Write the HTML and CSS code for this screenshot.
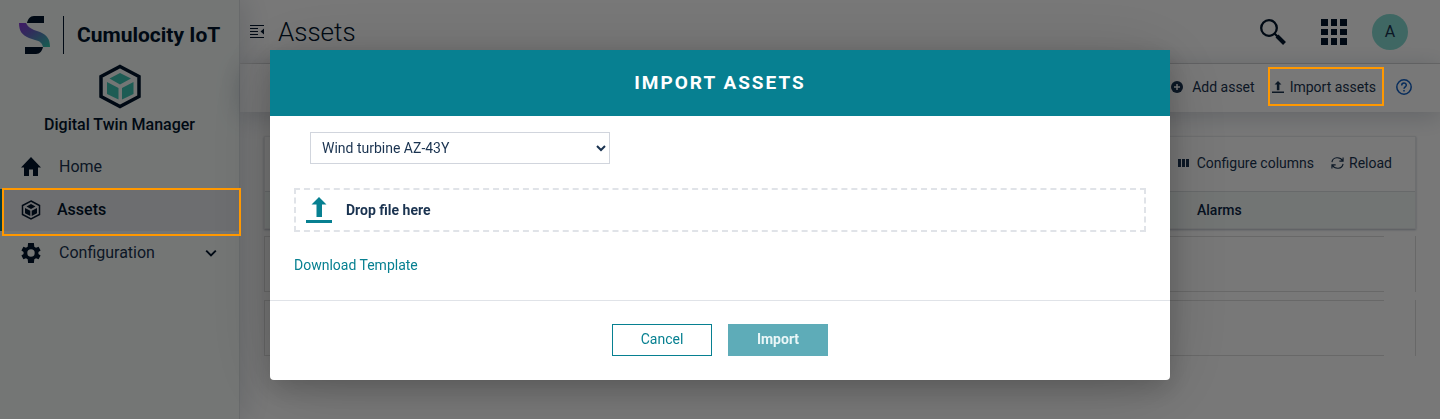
FILE: index.html
```html
<!DOCTYPE html>
<html lang="en">
<head>
<meta charset="utf-8">
<meta name="viewport" content="width=device-width, initial-scale=1">
<title>Digital Twin Manager - Assets</title>
<link rel="stylesheet" href="styles.css">
</head>
<body>
<svg class="sprite" aria-hidden="true">
  <symbol id="upload" viewBox="0 0 26 26"><path d="M13 0 20.5 7.5H16V20H10.500V7.500H5.500ZM0 23H26V26H0Z"/></symbol>
</svg>
<div class="app">
  <aside class="sidebar">
    <div class="brand">
      <svg class="brand-mark" viewBox="0 0 31 38" aria-hidden="true">
        <defs><linearGradient id="wave" x1="0" x2="1" y1="0" y2="1"><stop offset="0" stop-color="#8a35d8"/><stop offset=".35" stop-color="#6a5dc4"/><stop offset="1" stop-color="#2fc9aa"/></linearGradient></defs>
        <path fill="#00142b" d="M8 7C9 3 11 0 15 0H25V7ZM6 38V31H24C23 35 21 38 17 38Z"/>
        <path fill="url(#wave)" d="M0 7H7C8 10 11 12 15 14L21 16C28 19 31 23 31 31H24C23 27 21 25 16 24L10 22C3 19 0 15 0 7Z"/>
      </svg>
      <span class="brand-name">Cumulocity IoT</span>
    </div>
    <div class="product">
      <svg class="product-icon" viewBox="0 0 42 45" aria-hidden="true">
        <path fill="none" stroke="#00142b" stroke-width="3.500" d="M21 2.500 40 12.500V32.500L21 42.500 2 32.500V12.500Z"/>
        <path fill="#3ec4b3" d="M21 9 32 14.500 21 20.500 10.500 14.500ZM8 18 19.500 24V35.500L8 30ZM34.500 18 23 24V35.500L34.500 30Z"/>
      </svg>
      <span class="product-name">Digital Twin Manager</span>
    </div>
    <nav class="nav">
      <a class="nav-item" href="#home">
        <svg viewBox="0 0 20 20"><path d="M10 0 20 10.500H17V19H12V12.500H8V19H3V10.500H0Z"/></svg>
        <span>Home</span>
      </a>
      <a class="nav-item nav-active marked" href="#assets">
        <svg viewBox="0 0 20 20"><path fill="none" stroke="#00142b" stroke-width="1.500" d="M10 1 18.500 5.500V14.500L10 19 1.500 14.500V5.500Z"/><path d="M10 4 14.500 6.500 10 9 5.500 6.500ZM4 8 9.300 10.800V16L4 13.200ZM16 8 10.700 10.800V16L16 13.200Z"/></svg>
        <span>Assets</span>
      </a>
      <a class="nav-item" href="#configuration">
        <svg viewBox="2 2 20 20"><path d="M19.400 13a7.500 7.500 0 0 0 0-2l2.200-1.600-2-3.600-2.600 1a7 7 0 0 0-1.700-1L14.900 2H9.100L8.700 5.800a7 7 0 0 0-1.700 1l-2.600-1-2 3.600L4.600 11a7.500 7.500 0 0 0 0 2l-2.200 1.600 2 3.600 2.600-1a7 7 0 0 0 1.700 1L9.100 22h5.800l.4-3.800a7 7 0 0 0 1.700-1l2.600 1 2-3.600ZM12 15.700a3.700 3.700 0 1 1 0-7.400 3.700 3.700 0 0 1 0 7.400Z"/></svg>
        <span>Configuration</span>
        <svg class="chevron" viewBox="0 0 10 10"><path fill="none" stroke="#00142b" stroke-width="1.600" d="M1 3 5 7 9 3"/></svg>
      </a>
    </nav>
  </aside>
  <div class="content">
    <header class="topbar">
      <button class="icon-button" aria-label="Collapse navigation">
        <svg class="icon-collapse" viewBox="0 0 14 14"><path d="M0 0H14V1H0ZM0 3H8V4H0ZM0 6H8V7H0ZM0 9H8V10H0ZM0 12H14V13H0ZM14 3.500V9.500L10.500 6.500Z"/></svg>
      </button>
      <h1 class="page-title">Assets</h1>
      <div class="tools">
        <button class="icon-button" aria-label="Search">
          <svg class="icon-large" viewBox="0 0 26 26"><circle cx="9" cy="9" r="7.800" fill="none" stroke="#00142b" stroke-width="2.300"/><path fill="none" stroke="#00142b" stroke-width="2.300" d="M14.500 14.500 18 18"/><path fill="none" stroke="#00142b" stroke-width="4" d="M17 17 24.500 24.500"/></svg>
        </button>
        <button class="icon-button" aria-label="Applications">
          <svg class="icon-large" viewBox="0 0 26 26"><path d="M0 0H7V7H0ZM10 0H16V7H10ZM19 0H26V7H19ZM0 10H7V16H0ZM10 10H16V16H10ZM19 10H26V16H19ZM0 19H7V26H0ZM10 19H16V26H10ZM19 19H26V26H19Z"/></svg>
        </button>
        <button class="avatar" aria-label="User A">A</button>
      </div>
    </header>
    <div class="actionbar">
      <button class="action"><svg class="icon-small" viewBox="0 0 12 12"><circle cx="6" cy="6" r="6"/><path stroke="#fff" stroke-width="1.500" d="M6 3V9M3 6H9"/></svg>Add asset</button>
      <button class="action marked"><svg class="icon-small"><use href="#upload"/></svg>Import assets</button>
      <button class="help" aria-label="Help"><svg class="icon-help" viewBox="0 0 16 16"><g fill="none" stroke="#0f5fc4" stroke-width="1.500"><circle cx="8" cy="8" r="7.200"/><path d="M5.700 6.400C5.700 3.200 10.300 3.400 10.300 6.200 10.300 7.800 8 7.900 8 9.800M8 11V12.600"/></g></svg></button>
    </div>
    <main class="main">
      <section class="grid">
        <div class="grid-head"></div>
        <div class="grid-tools">
          <button class="action"><svg class="icon-small" viewBox="0 0 12 12"><path d="M0 2H3V10H0ZM4 2H7V10H4ZM8 2H11V10H8Z"/></svg>Configure columns</button>
          <button class="action reload"><svg class="icon-reload" viewBox="0 0 14 14"><path fill="none" stroke="#1a3350" stroke-width="1.200" d="M1 6C2 0 10 0 12.500 4.500M13 1V5H9M13 8C12 14 4 14 1.500 9.500M1 13V9H5"/></svg>Reload</button>
        </div>
        <table class="table">
          <thead><tr><th></th><th class="col-alarms">Alarms</th><th class="col-end"></th></tr></thead>
          <tbody>
            <tr><td></td><td></td><td></td></tr>
            <tr><td></td><td></td><td></td></tr>
          </tbody>
        </table>
      </section>
    </main>
  </div>
</div>
<div class="backdrop">
  <form class="modal" role="dialog" aria-labelledby="modal-title">
    <h2 class="modal-title" id="modal-title">IMPORT ASSETS</h2>
    <div class="modal-body">
      <select class="select" aria-label="Asset"><option>Wind turbine AZ-43Y</option></select>
      <label class="drop"><svg class="icon-drop" aria-hidden="true"><use href="#upload"/></svg>Drop file here<input class="file" type="file"></label>
      <a class="download" href="#template">Download Template</a>
    </div>
    <div class="modal-footer">
      <button class="button" type="button">Cancel</button>
      <button class="button button-primary" type="submit" disabled>Import</button>
    </div>
  </form>
</div>
</body>
</html>
```
FILE: styles.css
```css
* { box-sizing: border-box; }
body {
  margin: 0;
  font: 14px/20px Roboto, sans-serif;
  color: #1a3350;
  background: #fff;
}
button, select { font: inherit; color: inherit; }
button { padding: 0; border: 0; background: none; }
a { color: inherit; text-decoration: none; }
svg { display: block; flex: none; fill: #00142b; }
.sprite { position: absolute; width: 0; height: 0; }

.app { display: flex; min-height: 100vh; }
.sidebar {
  width: 240px;
  flex: none;
  background: #f6fbf9;
  border-right: 1px solid #dde2e4;
  box-shadow: 0 0 32px rgba(20, 40, 70, .2);
}
.brand { display: flex; align-items: center; gap: 13px; padding: 16px 0 0 19px; color: #00142b; }
.brand-mark { width: 31px; height: 38px; }
.brand-name {
  padding-left: 13px;
  border-left: 1px solid #00142b;
  font-size: 21px;
  font-weight: 700;
  line-height: 38px;
  white-space: nowrap;
}
.product { display: flex; flex-direction: column; align-items: center; gap: 6px; padding-top: 10px; }
.product-icon { width: 42px; height: 45px; }
.product-name { font-size: 16px; font-weight: 500; color: #00142b; }
.nav { padding-top: 10px; }
.nav-item {
  display: flex;
  align-items: center;
  gap: 18px;
  height: 44px;
  padding: 0 22px 0 21px;
  font-size: 16px;
}
.nav-item svg { width: 20px; height: 20px; }
.nav-item .chevron { width: 12px; height: 12px; margin-left: auto; }
.nav-active {
  gap: 16px;
  height: 42px;
  padding-left: 17px;
  font-weight: 500;
  color: #00142b;
  background: #e8e9ed;
  border-left: 4px solid #078091;
}
.marked { position: relative; }
.marked::after {
  content: "";
  position: absolute;
  inset: -1px -2px -5px -2px;
  z-index: 20;
  border: 2px solid #ff9800;
  pointer-events: none;
}

.content { flex: 1; min-width: 0; }
.topbar { display: flex; align-items: center; height: 64px; padding: 0 32px 0 10px; border-bottom: 1px solid #dcdcdc; }
.icon-collapse { width: 14px; height: 14px; }
.page-title { margin: 0 0 0 14px; font-size: 26px; line-height: 32px; font-weight: 300; color: #00142b; }
.tools { display: flex; align-items: center; gap: 35px; margin-left: auto; }
.icon-large { width: 26px; height: 26px; }
.avatar { width: 36px; height: 36px; margin-left: -10px; border-radius: 50%; background: #86dcd2; font-size: 16px; }
.actionbar {
  display: flex;
  align-items: center;
  justify-content: flex-end;
  gap: 17px;
  height: 48px;
  padding: 0 28px 2px 0;
  box-shadow: 0 4px 24px rgba(20, 40, 70, .2);
}
.action { display: flex; align-items: center; gap: 7px; white-space: nowrap; }
.actionbar .action { gap: 9px; }
.actionbar .marked { gap: 6px; }
.action svg { fill: #1a3350; }
.action.marked::after { inset: -10px -8px -9px -4px; }
.help { margin-left: 3px; }
.icon-small { width: 12px; height: 12px; }
.icon-reload { width: 13px; height: 14px; }
.icon-help { width: 16px; height: 16px; }
.main { padding: 24px; }
.grid { position: relative; }
.grid-head {
  position: absolute;
  inset: 0 0 auto;
  height: 93px;
  border: 1px solid #e8eaec;
  box-shadow: 0 1px 2px rgba(20, 40, 70, .3);
}
.grid-tools {
  display: flex;
  align-items: center;
  justify-content: flex-end;
  gap: 17px;
  height: 56px;
  padding: 0 24px 2px 0;
  border-bottom: 1px solid #dadfe1;
}
.reload { gap: 5px; }
.table { width: 100%; margin: -8px 0; border-spacing: 0 8px; table-layout: fixed; }
.table th { height: 36px; padding: 0 8px; text-align: left; font-weight: 500; color: #0b2545; background: #f3f9f7; }
.table td { height: 56px; padding: 0; border: solid #dedede; border-width: 1px 0; }
.table td:first-child { border-left-width: 1px; }
.table td:last-child { border-width: 0 1px 0 0; }
.col-alarms { width: 195px; }
.table .col-end { width: 32px; }

.backdrop {
  position: fixed;
  inset: 0;
  z-index: 10;
  padding-top: 50px;
  background: rgba(0, 0, 0, .53);
  overflow: hidden;
}
.modal {
  width: 900px;
  max-width: 100%;
  margin: 0 auto;
  background: #fff;
  border-radius: 4px;
  box-shadow: 0 8px 80px rgba(0, 0, 0, .15), 0 8px 28px rgba(0, 0, 0, .2);
}
.modal-title {
  margin: 0;
  padding: 20px 24px;
  font-size: 19px;
  line-height: 26px;
  font-weight: 700;
  letter-spacing: 2px;
  text-align: center;
  color: #fff;
  background: #078091;
}
.modal-body { display: flex; flex-direction: column; align-items: flex-start; padding: 16px 24px 25px; }
.select {
  width: 300px;
  height: 32px;
  margin-left: 16px;
  padding: 0 0 0 7px;
  border: 1px solid #d1d5dd;
  border-radius: 0;
  background: #fff;
}
.drop {
  display: flex;
  align-items: center;
  align-self: stretch;
  gap: 14px;
  height: 44px;
  margin: 24px 0 23px;
  padding: 0 10px;
  border: 2px dashed #e0e3e8;
  font-weight: 700;
}
.icon-drop { width: 26px; height: 26px; fill: #078091; }
.file { position: absolute; width: 1px; height: 1px; opacity: 0; }
.download { color: #078091; }
.modal-footer { display: flex; justify-content: center; gap: 16px; padding: 23px 24px 24px; border-top: 1px solid #e0e3e8; }
.button { width: 100px; height: 32px; padding-bottom: 2px; border: 1px solid #078091; color: #078091; background: #fff; }
.button-primary { border-color: #5eacb8; color: #e9f6f7; background: #5eacb8; font-weight: 700; }
```
